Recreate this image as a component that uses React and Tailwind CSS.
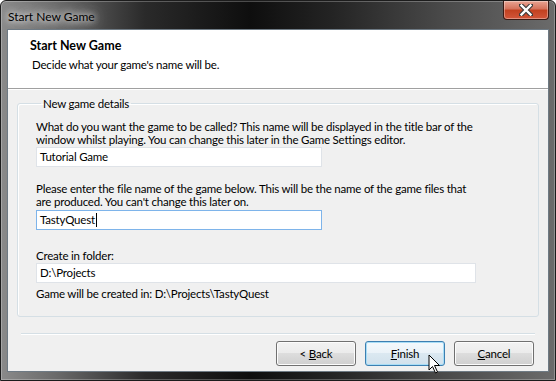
import React from 'react';

const uiFont = { fontFamily: 'Lato, "Noto Sans", sans-serif' };

const WizardButton = ({ label, hot, rest, isDefault }) => (
  <button
    className={
      'w-[80px] h-[25px] rounded-[3px] border text-[11.5px] tracking-[-0.2px] text-black flex items-center justify-center ' +
      (isDefault
        ? 'border-[#3c7fb1] bg-[linear-gradient(to_bottom,#f4f9fc_0%,#eaf2f8_50%,#dbe8f1_50%,#d1e1ec_100%)] shadow-[inset_0_0_0_1px_#a8ddf6]'
        : 'border-[#707070] bg-[linear-gradient(to_bottom,#f2f2f2_0%,#ebebeb_50%,#dddddd_50%,#cfcfcf_100%)] shadow-[inset_0_0_0_1px_#fcfcfc]')
    }
  >
    <span className="whitespace-pre">
      {label}
      <span className="underline">{hot}</span>
      {rest}
    </span>
  </button>
);

const CloseButton = () => (
  <div className="w-[46px] h-[19px] rounded-b-[4px] border border-t-0 border-[#3a1a14] bg-[linear-gradient(to_bottom,#e8a493_0%,#d4715a_45%,#c2401f_50%,#d2563a_100%)] flex items-center justify-center shadow-[inset_0_0_0_1px_rgba(255,255,255,0.35)]">
    <svg width="14" height="12" viewBox="0 0 14 12">
      <path d="M2 1 L12 11 M12 1 L2 11" stroke="#3b3b3b" strokeWidth="4.5" strokeLinecap="square" />
      <path d="M2.5 1.5 L11.5 10.5 M11.5 1.5 L2.5 10.5" stroke="#ffffff" strokeWidth="2.4" strokeLinecap="square" />
    </svg>
  </div>
);

const Cursor = () => (
  <svg width="14" height="21" viewBox="0 0 14 21" className="absolute left-[428px] top-[354px]">
    <path
      d="M1 1 L1 16 L4.5 12.5 L7.5 19 L9.5 18 L6.5 11.5 L11.5 11.5 Z"
      fill="#ffffff"
      stroke="#000000"
      strokeWidth="1"
      strokeLinejoin="round"
    />
  </svg>
);

const TextBox = ({ value, width, focused }) => (
  <div
    className={
      'h-[20px] bg-white border flex items-center pl-[3px] text-black ' +
      (focused ? 'border-[#7eb4ea]' : 'border-[#dfe3e8]')
    }
    style={{ width }}
  >
    {value}
    {focused && <span className="inline-block w-[1px] h-[14px] bg-black ml-[1px]" />}
  </div>
);

const App = () => {
  return (
    <div className="relative w-[556px] h-[381px] overflow-hidden bg-white" style={uiFont}>
      <div className="w-full h-full flex flex-col rounded-t-[6px] border border-[#1c1c1c] bg-[linear-gradient(to_right,#8a8a8a_0%,#6a6a6a_10%,#2a2a2a_26%,#0e0e0e_45%,#242424_60%,#4a4a4a_80%,#6b6b6b_100%)] shadow-[inset_0_0_0_1px_rgba(255,255,255,0.25)]">
        {/* title bar */}
        <div className="h-[28px] shrink-0 flex items-start justify-between pl-[7px] pr-[6px]">
          <div className="mt-[7px] text-[12px] text-black [text-shadow:0_0_6px_#fff,0_0_12px_#fff,0_0_18px_#ccc]">
            Start New Game
          </div>
          <CloseButton />
        </div>

        {/* client area */}
        <div className="mx-[6px] mb-[8px] flex-1 flex flex-col bg-[#f0f0f0] border border-[#6e7a84] text-[11.5px] tracking-[-0.2px] text-black">
          {/* header */}
          <div className="h-[59px] shrink-0 bg-white border-b border-[#a0a0a0] pl-[22px] pt-[8px]">
            <div className="text-[12.5px] font-bold tracking-normal leading-[16px]">Start New Game</div>
            <div className="leading-[16px] mt-[3px] ml-[2px]">Decide what your game's name will be.</div>
          </div>
          <div className="h-px bg-white" />

          {/* group box */}
          <fieldset className="mx-[9px] mt-[6px] border border-[#d5dfe5] rounded-[3px] px-[18px] pb-[16px] shadow-[inset_1px_1px_0_#ffffff]">
            <legend className="ml-[5px] px-[2px] leading-[15px]">New game details</legend>
            <div className="leading-[13px] mt-[9px] w-[442px]">
              What do you want the game to be called? This name will be displayed in the title bar of the
              window whilst playing. You can change this later in the Game Settings editor.
            </div>
            <div className="mt-[1px]">
              <TextBox value="Tutorial Game" width={286} />
            </div>
            <div className="leading-[13px] mt-[15px] w-[442px]">
              Please enter the file name of the game below. This will be the name of the game files that
              are produced. You can't change this later on.
            </div>
            <div className="mt-[2px]">
              <TextBox value="TastyQuest" width={286} focused />
            </div>
            <div className="leading-[13px] mt-[19px]">Create in folder:</div>
            <div className="mt-[1px]">
              <TextBox value="D:\Projects" width={440} />
            </div>
            <div className="leading-[13px] mt-[4px]">Game will be created in: D:\Projects\TastyQuest</div>
          </fieldset>

          {/* separator */}
          <div className="mx-[13px] mt-[16px] h-[2px] border-t border-[#d5dfe5] border-b border-b-white" />

          {/* buttons */}
          <div className="flex justify-end gap-[9px] pr-[14px] mt-[6px]">
            <WizardButton label="< " hot="B" rest="ack" />
            <WizardButton label="" hot="F" rest="inish" isDefault />
            <WizardButton label="" hot="C" rest="ancel" />
          </div>
        </div>
      </div>
      <Cursor />
    </div>
  );
};

export default App;
